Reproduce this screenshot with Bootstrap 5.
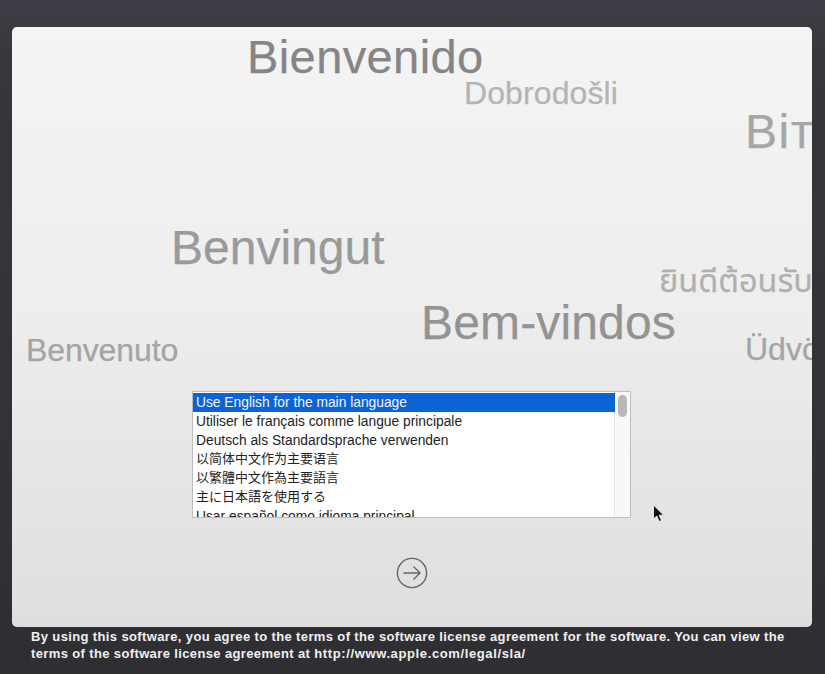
<!DOCTYPE html>
<html lang="en">
<head>
<meta charset="utf-8">
<title>Welcome</title>
<link href="https://cdn.jsdelivr.net/npm/bootstrap@5.3.0/dist/css/bootstrap.min.css" rel="stylesheet">
<style>
html,body{height:100%}
body{width:825px;height:674px;overflow:hidden;position:relative;background:linear-gradient(180deg,#3e3e46 0,#36363c 60px,#2f2f33 100%);font-family:"Liberation Sans",Arial,sans-serif}
.stage{width:800px;height:600px;margin:27px 0 0 12px;position:relative;overflow:hidden;border-radius:5px;background:linear-gradient(180deg,#f4f4f4 0,#eeeeee 45%,#dedede 100%)}
.word{position:absolute;white-space:nowrap;line-height:1;letter-spacing:0;color:#9a9a9a;-webkit-text-stroke:.25px currentColor}
.w1{left:235px;top:6px;font-size:47px;color:#858585;letter-spacing:.4px}
.w2{left:452px;top:50px;font-size:32px;color:#b4b4b4;letter-spacing:.1px}
.w3{left:733px;top:81px;font-size:48px;color:#a6a6a6;letter-spacing:1.500px}
.w4{left:159px;top:197px;font-size:48px;color:#9a9a9a}
.w5{left:647px;top:240px;font-size:32.500px;color:#b0b0b0;font-family:"Noto Sans Thai","Noto Sans","DejaVu Sans",sans-serif}
.w6{left:409px;top:272px;font-size:48px;color:#939393;letter-spacing:.15px}
.w7{left:14px;top:307px;font-size:32px;color:#a4a4a4;letter-spacing:-.1px}
.w8{left:733px;top:306px;font-size:32px;color:#a4a4a4}
.langbox{width:439px;height:127px;margin:364px 1px 0 0;position:relative;background:#fff;border:1px solid #bdbdbd;overflow:hidden}
.langlist{width:422px;padding-top:1px;border-radius:0;background:transparent}
.langrow{height:19px;line-height:19px;padding:0 0 0 3px;border:0;border-radius:0!important;font-size:13.800px;color:#222;background:transparent;white-space:nowrap;font-family:"Liberation Sans","Noto Sans CJK SC",sans-serif}
.langrow.active{background:#0b63d6;color:#f2f6ff;border:0;margin:0}
.langrow.cjk{font-size:13px;line-height:17px}
.langrow.tc{font-family:"Liberation Sans","Noto Sans CJK TC",sans-serif}
.langrow.jp{font-family:"Liberation Sans","Noto Sans CJK JP",sans-serif}
.trackbar{position:absolute;top:0;right:0;bottom:0;width:16px;background:#f8f8f8;border-left:1px solid #e4e4e4}
.thumbbar{position:absolute;top:3px;left:3px;width:9px;height:22px;border-radius:4.5px;background:#b8b8b8}
.gobtn{width:32px;height:32px;margin-top:39px;padding:0;border:0;background:transparent;display:block}
.legal{margin:1px 0 0 31px;width:770px;color:#f0f0f0;font-size:13px;font-weight:700;line-height:17px;letter-spacing:.37px}
.legalurl{letter-spacing:.62px}
.pointer{position:absolute;left:652px;top:504px;width:13px;height:19px}
</style>
</head>
<body>
<main class="stage d-flex flex-column align-items-center">
  <span class="word w1">Bienvenido</span>
  <span class="word w2">Dobrodošli</span>
  <span class="word w3">Вітаємо</span>
  <span class="word w4">Benvingut</span>
  <span class="word w5">ยินดีต้อนรับ</span>
  <span class="word w6">Bem-vindos</span>
  <span class="word w7">Benvenuto</span>
  <span class="word w8">Üdvözöljük</span>
  <div class="langbox">
    <ul class="list-group langlist">
      <li class="list-group-item langrow active">Use English for the main language</li>
      <li class="list-group-item langrow">Utiliser le français comme langue principale</li>
      <li class="list-group-item langrow">Deutsch als Standardsprache verwenden</li>
      <li class="list-group-item langrow cjk">以简体中文作为主要语言</li>
      <li class="list-group-item langrow cjk tc">以繁體中文作為主要語言</li>
      <li class="list-group-item langrow cjk jp">主に日本語を使用する</li>
      <li class="list-group-item langrow">Usar español como idioma principal</li>
    </ul>
    <div class="trackbar"><div class="thumbbar"></div></div>
  </div>
  <button class="btn gobtn" type="button" aria-label="Continue">
    <svg width="32" height="32" viewBox="0 0 32 32" fill="none" stroke="#666" stroke-width="1.4"><circle cx="16" cy="16" r="14.600"/><path d="M7.500 16H24M17.500 9.500 24 16l-6.500 6.500"/></svg>
  </button>
</main>
<p class="legal">By using this software, you agree to the terms of the software license agreement for the software. You can view the terms of the software license agreement at <span class="legalurl">http://www.apple.com/legal/sla/</span></p>
<svg class="pointer" viewBox="0 0 13 19"><path d="M1.500 1v14l3.300-3 2.300 5.500 2.400-1-2.300-5.300h4.500z" fill="#111" stroke="#fff" stroke-width=".8"/></svg>
<script src="https://cdn.jsdelivr.net/npm/bootstrap@5.3.0/dist/js/bootstrap.bundle.min.js"></script>
</body>
</html>
